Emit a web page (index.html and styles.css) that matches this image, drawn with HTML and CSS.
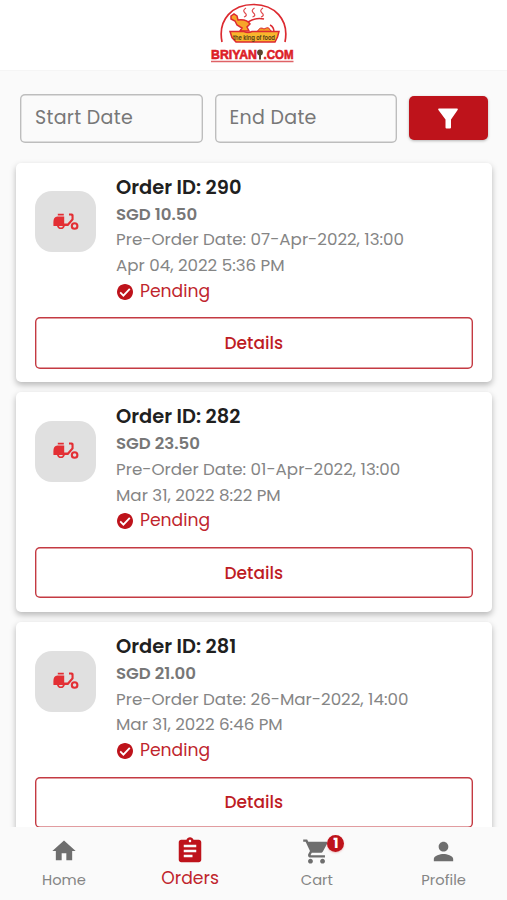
FILE: index.html
```html
<!DOCTYPE html>
<html lang="en">
<head>
<meta charset="utf-8">
<title>Orders</title>
<link rel="stylesheet" href="styles.css">
</head>
<body>
<svg width="0" height="0" class="defs" aria-hidden="true">
  <symbol id="scooter" viewBox="0 0 26 18">
    <path d="M4.800.8h6V2.500h-6zM4.400 3.600h6.800v7h3.300l4-4.600V3.200q0-.8-.8-.8H16V.4h2.700q1.900 0 1.900 1.900v4.500L15.300 13h-3.500a4 4 0 0 1-7.800 0H1q-.6 0-.6-.6V9q0-4.900 4-5.400z" fill="#e32f34"/>
    <path d="M5.900 13h4a2.050 2.050 0 0 1-4 0z" fill="#e0e0e0"/>
    <circle cx="21.600" cy="13" r="2.800" fill="none" stroke="#e32f34" stroke-width="2.100"/>
  </symbol>
  <symbol id="check" viewBox="2 2 20 20">
    <path fill="#be131b" d="M12 2C6.480 2 2 6.480 2 12s4.480 10 10 10 10-4.480 10-10S17.520 2 12 2z"/>
    <path fill="none" stroke="#fff" stroke-width="2.300" d="m6 12.500 4 4 8-8.500"/>
  </symbol>
</svg>
<div class="app">
  <header class="header">
    <svg class="logo" viewBox="0 0 90 64" width="90" height="64">
      <path d="M14 40C9.500 17 25 2.500 45.500 2.500S81.500 17 77 40" fill="none" stroke="#dc2a30" stroke-width="1.700"/>
      <path d="M38 6q-4 2.500-1 5t-1 4M46.500 6q-4 2.500-1 5t-1 4M55 6q-4 2.500-1 5t-1 4" fill="none" stroke="#df4a4e" stroke-width="1.200"/>
      <path d="M40 20q8-5 16-3m6 6q4 2 4 7" fill="none" stroke="#dc2a30" stroke-width="1.500"/>
      <path d="M49 30q3-6 7-3 5-3 6 1l4 3z" fill="#f49b25" stroke="#dc2a30"/>
      <path d="m23 14 3-2 3 2 1 4q9-1 12 4l-3 3 2 4H32l2-3-5-3-2-4-4-2z" fill="#f7a529" stroke="#dc2a30" stroke-width="1.500"/>
      <path d="M22 29.500h14q4 2 8 0h27l-1.500 5.500-2.500 5H28l-4-4.500z" fill="#f8b62d" stroke="#dc2a30" stroke-width="1.500"/>
      <text class="tagline" x="25" y="37.500" textLength="42" lengthAdjust="spacingAndGlyphs">the king of food</text>
      <text class="brand" x="3" y="57.200" textLength="46" lengthAdjust="spacingAndGlyphs">BRIYAN</text>
      <path d="M52 57.500v-7" stroke="#59462d" stroke-width="2"/>
      <circle cx="52" cy="50.500" r="2.900" fill="#59462d"/>
      <text class="brand" x="55.500" y="57.200" textLength="30" lengthAdjust="spacingAndGlyphs">.COM</text>
      <path d="M3 59.500h82.500" stroke="#df6266" stroke-width="1.300"/>
    </svg>
  </header>
  <main class="content">
    <div class="filters">
      <div class="field"><span>Start Date</span></div>
      <div class="field"><span>End Date</span></div>
      <button class="filter" aria-label="Filter">
        <svg width="20" height="21" viewBox="0 0 20 21"><path d="M1 .5h18q1 .1.800 1.200L13 11.500v8q0 1-1 1H8.500q-1 0-1-1v-8L.2 1.700Q0 .6 1 .5z" fill="#fff"/></svg>
      </button>
    </div>
    <section class="orders">
      <article class="card">
        <div class="summary">
          <div class="thumb"><svg width="26" height="18"><use href="#scooter"/></svg></div>
          <div class="info">
            <h2>Order ID: 290</h2>
            <p class="price">SGD 10.50</p>
            <p>Pre-Order Date: 07-Apr-2022, 13:00</p>
            <p>Apr 04, 2022 5:36 PM</p>
            <p class="status"><svg width="16" height="16"><use href="#check"/></svg><span>Pending</span></p>
          </div>
        </div>
        <button class="details">Details</button>
      </article>
      <article class="card">
        <div class="summary">
          <div class="thumb"><svg width="26" height="18"><use href="#scooter"/></svg></div>
          <div class="info">
            <h2>Order ID: 282</h2>
            <p class="price">SGD 23.50</p>
            <p>Pre-Order Date: 01-Apr-2022, 13:00</p>
            <p>Mar 31, 2022 8:22 PM</p>
            <p class="status"><svg width="16" height="16"><use href="#check"/></svg><span>Pending</span></p>
          </div>
        </div>
        <button class="details">Details</button>
      </article>
      <article class="card">
        <div class="summary">
          <div class="thumb"><svg width="26" height="18"><use href="#scooter"/></svg></div>
          <div class="info">
            <h2>Order ID: 281</h2>
            <p class="price">SGD 21.00</p>
            <p>Pre-Order Date: 26-Mar-2022, 14:00</p>
            <p>Mar 31, 2022 6:46 PM</p>
            <p class="status"><svg width="16" height="16"><use href="#check"/></svg><span>Pending</span></p>
          </div>
        </div>
        <button class="details">Details</button>
      </article>
    </section>
  </main>
  <nav class="nav">
    <a class="tab"><svg width="28" height="28" viewBox="0 0 24 24"><path d="M10 20v-6h4v6h5v-8h3L12 3 2 12h3v8z"/></svg><span>Home</span></a>
    <a class="tab active"><svg width="30" height="30" viewBox="0 0 24 24"><path d="M19 3h-4.180C14.400 1.840 13.300 1 12 1c-1.300 0-2.400.84-2.820 2H5c-1.100 0-2 .9-2 2v14c0 1.100.9 2 2 2h14c1.100 0 2-.9 2-2V5c0-1.100-.9-2-2-2zm-7 0c.55 0 1 .45 1 1s-.45 1-1 1-1-.45-1-1 .45-1 1-1zm2 14H7v-2h7v2zm3-4H7v-2h10v2zm0-4H7V7h10v2z"/></svg><span>Orders</span></a>
    <a class="tab"><span class="cart"><svg width="29" height="29" viewBox="0 0 24 24"><path d="M7 18c-1.100 0-1.990.9-1.990 2S5.900 22 7 22s2-.9 2-2-.9-2-2-2zM1 2v2h2l3.600 7.590-1.350 2.450c-.16.28-.25.61-.25.96 0 1.100.9 2 2 2h12v-2H7.420c-.14 0-.25-.11-.25-.25l.03-.12.9-1.630h7.450c.75 0 1.410-.41 1.750-1.030l3.580-6.490c.08-.14.12-.31.12-.48 0-.55-.45-1-1-1H5.210l-.94-2H1zm16 16c-1.100 0-1.990.9-1.990 2s.89 2 1.990 2 2-.9 2-2-.9-2-2-2z"/></svg><b class="badge">1</b></span><span>Cart</span></a>
    <a class="tab"><svg width="29" height="29" viewBox="0 0 24 24"><path d="M12 12c2.210 0 4-1.790 4-4s-1.790-4-4-4-4 1.790-4 4 1.790 4 4 4zm0 2c-2.670 0-8 1.340-8 4v2h16v-2c0-2.660-5.330-4-8-4z"/></svg><span>Profile</span></a>
  </nav>
</div>
</body>
</html>
```
FILE: styles.css
```css
* { box-sizing: border-box; }
body { margin: 0; background: #fafafa; font-family: Poppins, Inter, sans-serif; }
.defs { display: none; }
.app { display: flex; flex-direction: column; height: 900px; overflow: hidden; }
.header { height: 70px; flex: none; display: flex; justify-content: center; padding-top: 2px; padding-right: 1px; background: #fff; box-shadow: 0 0 1px rgba(0,0,0,.12); }
.tagline { font: 600 7px Poppins, sans-serif; fill: #554018; }
.brand { font: 700 13px "Liberation Sans", sans-serif; fill: #dc2027; stroke: #dc2027; stroke-width: .6px; }
.content { flex: 1; min-height: 0; overflow: hidden; padding: 23.500px 15px 0 15.500px; }
.filters { display: flex; align-items: center; gap: 12px; padding: 0 4.500px; }
.field { width: 182.500px; height: 49px; flex: none; box-shadow: inset 0 0 0 1.400px #bdbdbd; border-radius: 5px; padding-left: 15px; display: flex; align-items: center; font-size: 19px; letter-spacing: .3px; color: #777; }
.field span { margin-top: -1px; }
.filter { flex: 1; height: 44px; padding: 0; display: flex; align-items: center; justify-content: center; border: 0; border-radius: 5px; background: #be131b; box-shadow: 0 1px 3px rgba(0,0,0,.28); }
.orders { display: flex; flex-direction: column; gap: 10px; padding-top: 20px; }
.card { height: 219.700px; flex: none; padding: 10.200px 19.500px 0; border-radius: 5px; background: #fff; box-shadow: 0 3px 6px rgba(0,0,0,.27); }
.summary { display: flex; gap: 20px; }
.thumb { width: 61px; height: 61px; margin-top: 18.500px; border-radius: 17px; background: #e0e0e0; display: flex; align-items: center; justify-content: center; }
h2, p { margin: 0; white-space: nowrap; }
h2 { font-size: 19.400px; line-height: 29px; font-weight: 600; color: #202020; }
p { font-size: 16.700px; line-height: 25.700px; color: #858585; }
.price { font-size: 16.600px; font-weight: 600; color: #777; }
.status { display: flex; align-items: center; gap: 7px; padding-left: 1px; font-size: 17.200px; color: #c0252d; }
.details { display: block; width: 100%; height: 51.500px; margin-top: 12.800px; border: 0; box-shadow: inset 0 0 0 1.400px #c43a42; border-radius: 5px; background: #fff; color: #be1c24; font: 500 17px Poppins, Inter, sans-serif; padding: 0; }
.nav { height: 73px; flex: none; display: grid; grid-template-columns: repeat(4, 1fr); background: #fafafa; position: relative; }
.tab { display: flex; flex-direction: column; align-items: center; padding-top: 10px; color: #858585; font-size: 14.700px; line-height: 22px; }
.tab:first-child { padding-left: 1px; }
.tab svg { display: block; fill: #6e6e6e; }
.tab > span:last-child { margin-top: auto; margin-bottom: 9px; }
.active { font-size: 17.200px; color: #c0252d; padding-top: 9px; }
.tab.active svg { fill: #be131b; }
.tab.active > span:last-child { margin-bottom: 11px; }
.cart { position: relative; }
.badge { position: absolute; left: 25px; top: -2px; width: 17px; height: 17px; border-radius: 50%; background: #be131b; color: #fff; font-size: 14px; line-height: 17px; text-align: center; box-shadow: 0 1px 2px rgba(190,19,27,.25); }
```
